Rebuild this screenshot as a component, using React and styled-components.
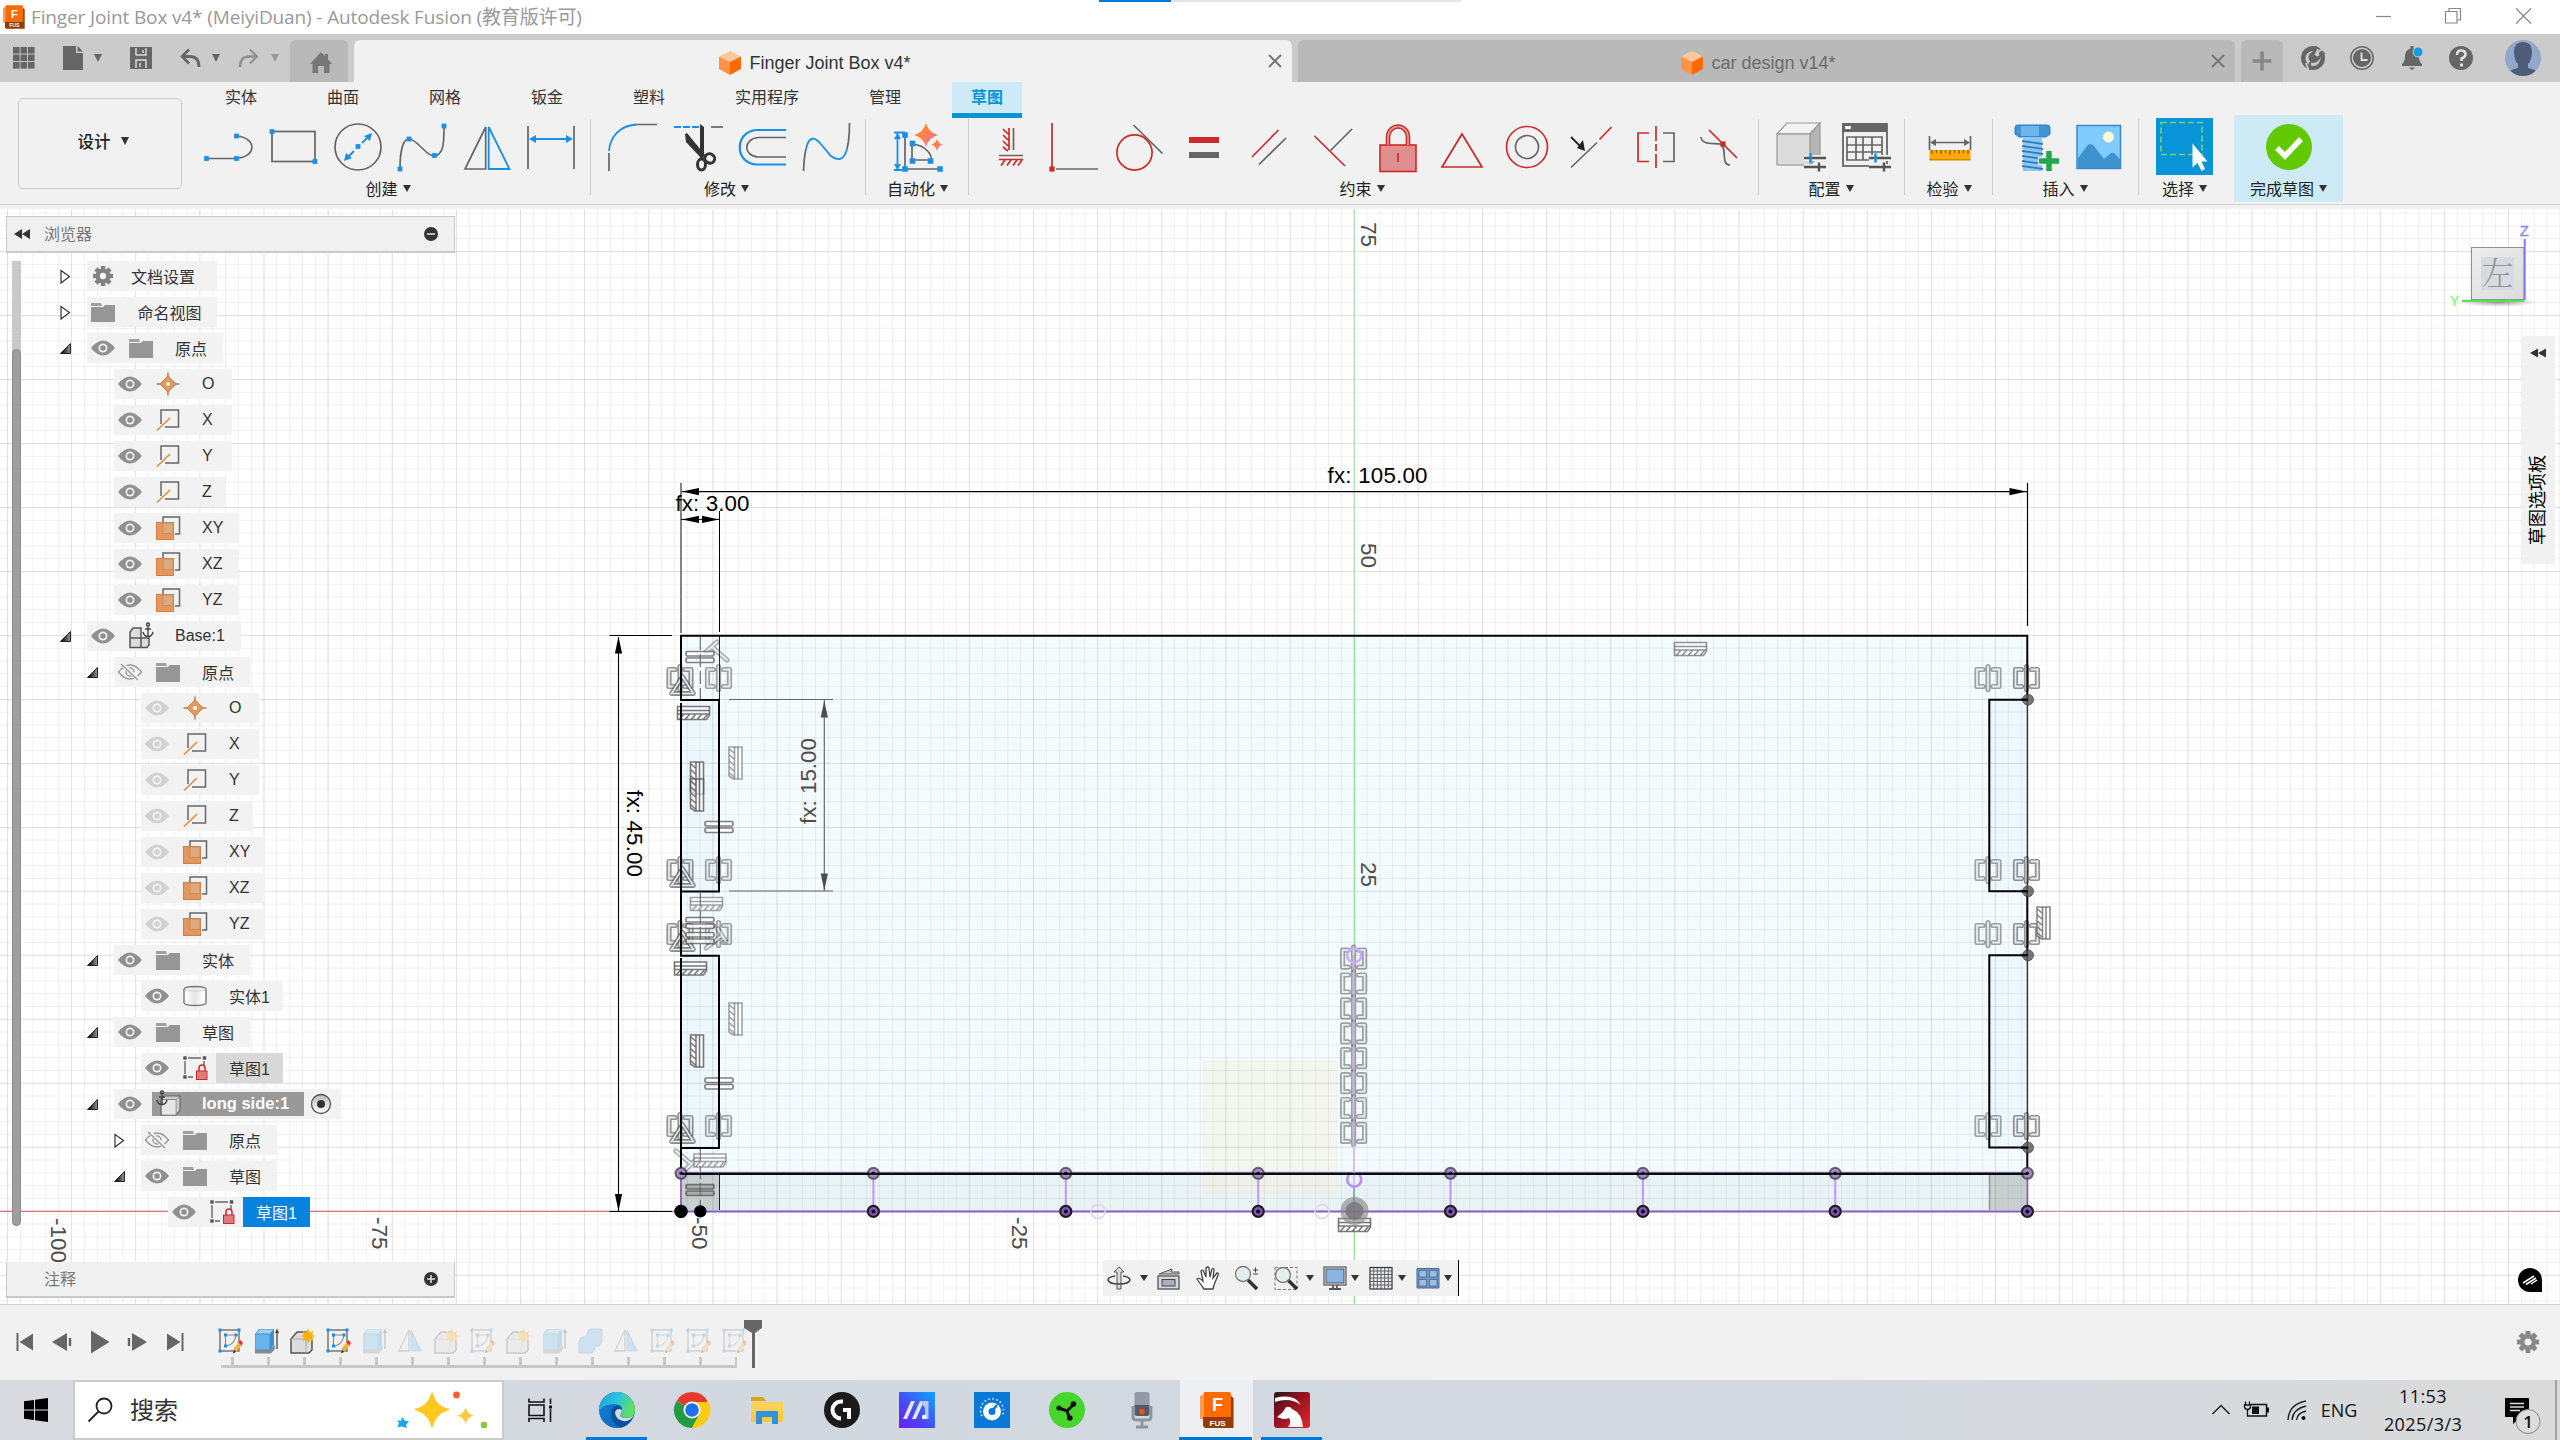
import React from 'react';
import styled, { createGlobalStyle } from 'styled-components';

const BLUE = '#1a8fe8';
const GREY = '#666';
const RED = '#cc2a2a';
const PURPLE = '#8a5cc0';

const Global = createGlobalStyle`
  * { box-sizing: border-box; }
  html, body { margin: 0; padding: 0; overflow: hidden; background: #fff; }
  body { font-family: "Liberation Sans", "Noto Sans CJK SC", sans-serif; font-size: 16px; color: #333; }
  svg { display: block; flex: none; overflow: visible; }
`;

const Screen = styled.div`
  width: 2560px;
  height: 1440px;
  display: grid;
  grid-template-rows: 34px 48px 127px 1096px 75px 60px;
  overflow: hidden;
`;

/* ---------- helpers ---------- */
const Ico = ({ s = 24, w, h, children, ...p }) => {
  const W = w || s;
  const H = h || s;
  return (
    <svg width={W} height={H} viewBox={`${-W / 2} ${-H / 2} ${W} ${H}`} fill="none" {...p}>
      {children}
    </svg>
  );
};
const Sq = ({ x, y, c = BLUE, r = 2.4 }) => <rect x={x - r} y={y - r} width={r * 2} height={r * 2} fill={c} />;

const Caret = styled.span`
  width: 0;
  height: 0;
  border-left: ${(p) => p.$w || 4.5}px solid transparent;
  border-right: ${(p) => p.$w || 4.5}px solid transparent;
  border-top: ${(p) => p.$h || 7}px solid ${(p) => p.$c || '#333'};
`;

/* ---------- title bar ---------- */
const TitleBar = styled.header`
  display: grid;
  grid-template-columns: 1099px 362px 1fr;
  background: #fff;
`;
const TitleLeft = styled.div`
  display: flex;
  align-items: center;
  gap: 6px;
  padding-left: 3px;
`;
const TitleText = styled.span`
  font: 19px/34px "Open Sans", "Noto Sans CJK SC", sans-serif;
  letter-spacing: -0.13px;
  color: #999;
  white-space: nowrap;
`;
const Progress = styled.div`
  height: 2px;
  background: linear-gradient(to right, #0078d7 72px, #e3e3e3 72px);
`;
const WinButtons = styled.div`
  display: flex;
  justify-content: flex-end;
  align-items: center;
  gap: 46px;
  padding-right: 25px;
  padding-bottom: 2px;
`;

const FusionLogo = ({ w = 22, h = 24 }) => (
  <svg width={w} height={h} viewBox="0 0 34 36">
    <path d="M0 4 L6 1 V27 H0z" fill="#ff9a55" />
    <path d="M4 0 H29 a2 2 0 0 1 2 2 V25 H4z" fill="#ff6b00" />
    <path d="M31 4 L33.5 6 V36 H31z" fill="#8f3d00" />
    <path d="M3 25 H31 V36 H5 L3 34z" fill="#933c00" />
    <text x="17.5" y="19" fontSize="18" fontWeight="700" fontFamily="Liberation Sans" fill="#fff" textAnchor="middle">F</text>
    <text x="17.5" y="33.5" fontSize="8" fontWeight="700" fontFamily="Liberation Sans" fill="#fff" textAnchor="middle">FUS</text>
  </svg>
);

/* ---------- document tab bar ---------- */
const TabBar = styled.div`
  display: flex;
  align-items: flex-end;
  background: #cbcbcb;
`;
const QuickAccess = styled.div`
  width: 290px;
  height: 48px;
  display: grid;
  grid-template-columns: 24px 49px 17px 51px 49px 18px 41px 18px;
  padding-left: 12px;
  align-items: center;
  justify-items: end;
`;
const HomeTab = styled.div`
  width: 58px;
  height: 42px;
  margin-right: 6px;
  border-radius: 6px 6px 0 0;
  background: #b9b9b9;
  display: flex;
  justify-content: center;
  align-items: center;
  padding: 4px 0 0 4px;
`;
const DocTab = styled.div`
  width: ${(p) => p.$w}px;
  height: 42px;
  margin-right: 6px;
  border-radius: 6px 6px 0 0;
  background: ${(p) => (p.$active ? '#f1f1f1' : '#b9b9b9')};
  color: ${(p) => (p.$active ? '#333' : '#6a6a6a')};
  display: grid;
  grid-template-columns: 1fr auto 1fr;
  align-items: center;
  font-size: 18px;
  padding-right: 10px;
`;
const DocName = styled.div`
  grid-column: 2;
  display: flex;
  align-items: center;
  gap: 8px;
  padding: 4px 6px 0 0;
`;
const DocClose = styled.div`
  justify-self: end;
`;
const AddTab = styled.div`
  width: 42px;
  height: 42px;
  border-radius: 6px 6px 0 0;
  background: #b9b9b9;
  display: flex;
  align-items: center;
  justify-content: center;
`;
const Account = styled.div`
  height: 48px;
  display: grid;
  grid-template-columns: repeat(4, 49.5px) 74px;
  padding-left: 5px;
  align-items: center;
  justify-items: center;
`;
const Cube = () => (
  <Ico w={22} h={24}>
    <path d="M0 -12 L11 -6.5 L0 -1 L-11 -6.5z" fill="#ffc79c" />
    <path d="M-11 -6.5 L0 -1 V12 L-11 6z" fill="#ff934a" />
    <path d="M11 -6.5 L0 -1 V12 L11 6z" fill="#ff6a00" />
  </Ico>
);
const Cross = () => (
  <Ico s={14}><path d="M-6 -6 L6 6 M6 -6 L-6 6" stroke="#777" strokeWidth="2" /></Ico>
);

/* ---------- ribbon ---------- */
const Ribbon = styled.section`
  background: #f1f1f1;
  display: grid;
  height: 127px;
  padding-bottom: 4px;
`;
const RibbonInner = styled.div`
  display: grid;
  grid-template-columns: 191px 1fr;
  border-bottom: 1px solid #d2d2d2;
`;
const Workspace = styled.button`
  width: 164px;
  height: 91px;
  margin: 16px 0 0 18px;
  border: 1.5px solid #c9c9c9;
  border-radius: 5px;
  background: #f1f1f1;
  display: flex;
  align-items: center;
  justify-content: center;
  gap: 10px;
  padding: 0 0 5px 6px;
  font: 500 16.5px "Noto Sans CJK SC", sans-serif;
  color: #222;
`;
const RibbonMain = styled.div`
  display: grid;
  grid-template-rows: 36px 1fr;
`;
const MenuTabs = styled.nav`
  display: flex;
  gap: 32px;
  padding-left: 15px;
`;
const MenuTab = styled.span`
  height: 36px;
  padding: 0 19px 0;
  display: flex;
  align-items: center;
  font-size: 16px;
  line-height: 30px;
  color: ${(p) => (p.$on ? '#0a94d8' : '#333')};
  font-weight: ${(p) => (p.$on ? 700 : 400)};
  background: ${(p) => (p.$on ? '#cdeaf6' : 'transparent')};
  border-bottom: ${(p) => (p.$on ? '5px solid #0a94d8' : '5px solid transparent')};
`;
const Groups = styled.div`
  display: flex;
`;
const Group = styled.div`
  width: ${(p) => p.$w}px;
  height: 87px;
  display: flex;
  flex-direction: column;
  align-items: center;
  background: ${(p) => (p.$hl ? '#cdebf6' : `linear-gradient(#cfcfcf, #cfcfcf) ${p.$last ? '-9px' : '100%'} 4px / 1.5px 76px no-repeat`)};
  margin: -3px 0 0 ${(p) => (p.$hl ? 4 : 0)}px;
  padding-top: 3px;
`;
const Tools = styled.div`
  display: flex;
  justify-content: center;
  height: 57px;
  align-items: center;
  padding-left: ${(p) => Math.max(0, p.$dx || 0)}px;
  padding-right: ${(p) => Math.max(0, -(p.$dx || 0))}px;
`;
const Tool = styled.div`
  width: ${(p) => p.$w || 64.5}px;
  display: flex;
  justify-content: center;
`;
const SelectTile = styled.div`
  width: 57px;
  height: 57px;
  background: #0a94d8;
  display: flex;
`;
const GroupLabel = styled.div`
  display: flex;
  align-items: center;
  gap: 5px;
  height: 26px;
  padding-right: ${(p) => p.$pull || 0}px;
  font-size: 16px;
  color: #222;
`;

const T = ({ children }) => <Ico s={56}>{children}</Ico>;
const g = { stroke: GREY, strokeWidth: 1.7 };
const b = { stroke: BLUE, strokeWidth: 1.8 };
const r = { stroke: RED, strokeWidth: 1.7 };

const Sliders = ({ x, y }) => (
  <g transform={`translate(${x} ${y})`}>
    <path d="M-11 -4 H11 M-11 5 H11" stroke="#f1f1f1" strokeWidth="6" />
    <path d="M-11 -4 H11 M-11 5 H11 M4 0.5 V9.5" stroke="#555" strokeWidth="2.4" />
    <path d="M-4.5 -8.5 V0.5" stroke={BLUE} strokeWidth="2.6" />
  </g>
);

const createTools = [
  <T><path d="M-22 11.5 H7 C28 10 28 -9 8 -11" {...g} /><Sq x={-22.5} y={11.5} /><Sq x={7.5} y={11.5} /><Sq x={7.5} y={-11} /></T>,
  <T><rect x="-21" y="-15.5" width="43" height="30" {...g} /><Sq x={-21} y={-15.5} /><Sq x={22} y={14.5} /></T>,
  <T><circle r="23" {...g} /><path d="M-10 10 L-4 4 M4 -4 L10 -10" {...b} /><path d="M14 -14 L12 -6 L6 -11z M-14 14 L-12 6 L-6 11z" fill={BLUE} /><Sq x={0} y={-0.5} /></T>,
  <T><path d="M-22 22 C-22 8 -20 -8 -13 -8 C-5 -8 4 9 12 9 C22 8 22 -5 22 -21" {...g} /><Sq x={-22} y={22} /><Sq x={-13} y={-8} /><Sq x={12.5} y={8.5} /><Sq x={22} y={-21} /></T>,
  <T><path d="M-1.3 -20 V22 H-22z" {...g} /><path d="M1.7 -20 V22 H22.5z" {...b} /></T>,
  <T><path d="M-23 -21 V22 M23 -21 V22" {...g} /><path d="M-18 -8 H18" {...b} /><path d="M-22 -8 L-15 -12 V-4z M22 -8 L15 -12 V-4z" fill={BLUE} /></T>,
];
const modifyTools = [
  <T><path d="M-24 6 V24 M4 -22.5 H24" {...g} /><path d="M-24 4 C-23 -10 -13 -22 4 -22.5" {...b} /></T>,
  <T>
    <path d="M-24 -20 H1" stroke={BLUE} strokeWidth="2" strokeDasharray="7 2" /><path d="M13 -20 H25" {...g} />
    <path d="M2 -23 L6 -20 V9 L2 12z M-13 -13 L-11 -14 L7 8 L4 12 L-12 -5z" fill="#333" />
    <ellipse cx="3.5" cy="17.5" rx="4" ry="5.6" stroke="#333" strokeWidth="3" />
    <ellipse cx="12" cy="11.5" rx="5" ry="4.6" transform="rotate(30 12 11)" stroke="#333" strokeWidth="3" />
  </T>,
  <T><path d="M24 -17 H-5 C-28 -16 -28 17 -5 17.5 H24" stroke={BLUE} strokeWidth="2.2" /><path d="M24 -9.5 H-4 C-19 -8 -19 9 -4 10 H24" {...g} /></T>,
  <T><path d="M-23.5 24 C-23 14 -22.5 8 -21 2 M22.5 -24 C22.5 -12 22 -6 20 2" {...g} /><path d="M-21 2 C-18 -12 -12 -9 -8 -5 L4 9 C10 14 17 14 20 2" {...b} /></T>,
];
const autoTools = [
  <T>
    <path d="M-13 -11 V20 M-11 22 H20" {...g} /><path d="M-6 -3 C8 -2 14 8 13 13 H-6z" {...g} />
    <path d="M-20.5 -14 V22 M-24 -14.5 H-13 M-24 23 H-16" {...b} /><path d="M-20.5 -14 L-24 -8 H-17z M-20.5 23 L-24 17 H-17z" fill={BLUE} />
    <Sq x={-13} y={-12} r={2.8} /><Sq x={-5.5} y={-3.5} r={2.8} /><Sq x={-5.5} y={14} r={2.8} /><Sq x={12.5} y={14} r={2.8} /><Sq x={-13} y={22} r={2.8} /><Sq x={22} y={22} r={2.8} />
    <defs><linearGradient id="spk" x1="0" y1="0" x2="1" y2="1"><stop offset="0.2" stopColor="#ff8a1e" /><stop offset="0.6" stopColor="#ff7a66" /><stop offset="1" stopColor="#e85de0" /></linearGradient></defs>
    <path d="M8 -24 Q10.5 -14.5 20 -12 Q10.5 -9.5 8 0 Q5.5 -9.5 -4 -12 Q5.5 -14.5 8 -24z" fill="url(#spk)" />
    <path d="M19 -8 Q20.2 -3.5 25 -2.5 Q20.2 -1.5 19 4 Q17.8 -1.5 13 -2.5 Q17.8 -3.5 19 -8z" fill="url(#spk)" />
  </T>,
];
const constraintTools = [
  <T>
    <path d="M-2 -19 V3 M-8 -18 L-3 -13 M-8 -12 L-3 -7 M-8 -6 L-3 -1 M-8 0 L-3 4 M-12 12.5 H12 M-10 18.5 L-6 13 M-4 18.5 L0 13 M2 18.5 L6 13 M7 18.5 L11 13" {...r} />
    <path d="M2.5 -19 V3 M-12 8.5 H12" {...g} />
  </T>,
  <T><path d="M-23 -24 V20" {...r} /><Sq x={-23} y={22} c={RED} r={2.6} /><path d="M-19 22 H23" {...g} /></T>,
  <T><circle cx="-5.5" cy="5.5" r="17.6" {...r} /><path d="M-6.5 -22 L22.5 6.5" {...g} /></T>,
  <T><rect x="-15" y="-10" width="30" height="6" fill={RED} /><rect x="-15" y="5" width="30" height="6" fill={GREY} /></T>,
  <T><path d="M-17 10 L9.5 -17" {...r} /><path d="M-10 17.5 L17 -9" {...g} /></T>,
  <T><path d="M-18.5 -11 L12 19" {...r} /><path d="M-2.5 3.5 L19 -18" {...g} /></T>,
  <T><rect x="-18" y="-2" width="36" height="26.5" fill="#df8f8f" stroke={RED} strokeWidth="1.6" /><path d="M-10 -2 V-10 A10 10.5 0 0 1 10 -10 V-2" stroke={RED} strokeWidth="4.6" /><path d="M-10 -2 V-10 A10 10.5 0 0 1 10 -10 V-2" stroke="#e79b9b" strokeWidth="1.6" /><path d="M0 6 V15" {...r} /></T>,
  <T><path d="M0 -13 L20 20 H-20z" {...r} /></T>,
  <T><circle r="20.5" {...r} /><circle r="11.5" {...g} /></T>,
  <T><path d="M-20 20.5 L6 -4.5" {...g} /><path d="M8.5 -7.5 L20.5 -20" {...r} /><path d="M-20 -10 L-10 0" stroke="#222" strokeWidth="1.8" /><path d="M-6 4 L-14 1 L-8 -7z" fill="#222" /></T>,
  <T><path d="M-7 -14 H-18 V14.5 H-7 M0 -21 V-6 M0 -3 V4 M0 7 V21" {...r} /><path d="M7 -14 H18 V14.5 H7" {...g} /></T>,
  <T><path d="M-19 -10 C-18 -2 -8 -4 0 -3 C8 0 0 18 10 18" {...g} /><path d="M-11 -17 L17 11" {...r} /><Sq x={3} y={-3} c={RED} r={2.6} /></T>,
];
const configTools = [
  <T>
    <path d="M-24 -13 L-14 -24 H19 L9 -13z" fill="#f2f2f2" stroke="#999" strokeWidth="1.2" />
    <path d="M9 -13 L19 -24 V8 L9 18z" fill="#b5b5b5" stroke="#999" strokeWidth="1.2" />
    <rect x="-24" y="-13" width="33" height="31" fill="#dcdcdc" stroke="#999" strokeWidth="1.2" />
    <Sliders x={14} y={15} />
  </T>,
  <T>
    <rect x="-23" y="-23" width="44" height="42" stroke={GREY} strokeWidth="1.8" /><rect x="-24" y="-24" width="45" height="9" fill={GREY} /><rect x="-21" y="-21" width="6" height="3" fill="#fff" />
    <path d="M-19 -10 H16 V13 H-19z M-19 -2 H16 M-19 5 H16 M-10 -10 V13 M-3 -10 V13 M6 -10 V13" {...g} />
    <Sliders x={14} y={15} />
  </T>,
];
const measureTools = [
  <T><path d="M-20.5 -11 V3 M20.5 -11 V3 M-16 -4.5 H16" {...g} /><path d="M-20 -4.5 L-14 -8 V-1z M20 -4.5 L14 -8 V-1z" fill={GREY} /><rect x="-20.5" y="3" width="41" height="10" fill="#ffaa00" /><rect x="-20.5" y="12" width="41" height="1.5" fill="#d98500" />
    <path d="M-18 3 V7 M-13.5 3 V6 M-9 3 V7 M-4.5 3 V6 M0 3 V8 M4.5 3 V6 M9 3 V7 M13.5 3 V6 M18 3 V7" stroke="#7a5500" strokeWidth="1.2" /></T>,
];
const insertTools = [
  <T>
    <path d="M-22 -19 Q-22 -22 -19 -22 H10 Q13 -22 13 -19 V-13 L9 -10 H-18 L-22 -13z" fill="#3f94d8" stroke="#2f7dbd" /><rect x="-16" y="-21" width="18" height="10" fill="#6db6ec" />
    <path d="M-14 -10 H5 V24 H-14z" fill="#8cc6f2" /><path d="M-15 -6 L6 -3 M-15 -1 L6 2 M-15 4 L6 7 M-15 9 L6 12 M-15 14 L6 17 M-15 19 L6 22" stroke="#2f7dbd" strokeWidth="1.8" />
    <path d="M12 3 V25 M1 14 H23" stroke="#f1f1f1" strokeWidth="8" /><path d="M12 4 V24 M2 14 H22" stroke="#22a84a" strokeWidth="5.5" />
  </T>,
  <T><rect x="-22" y="-21.5" width="43.5" height="43" fill="#80ccff" stroke="#3a87c4" strokeWidth="1.5" /><path d="M-21 11 L-12 -1 Q-9 -5 -5 -1 L5 12 L11 7 Q14 4 17 8 L21 12 V21 H-21z" fill="#3e93cf" /><circle cx="9.5" cy="-10" r="5" fill="#fffbd0" stroke="#fff" /></T>,
];

const ToolGroup = ({ w, label, tools, tw, dx, pull }) => (
  <Group $w={w}>
    <Tools $dx={dx}>{tools.map((t, i) => <Tool key={i} $w={tw}>{t}</Tool>)}</Tools>
    <GroupLabel $pull={pull}>{label}<Caret /></GroupLabel>
  </Group>
);

/* ---------- viewport ---------- */
const Viewport = styled.main`
  display: grid;
  height: 1096px;
  overflow: hidden;
  border-bottom: 1px solid #cfcfcf;
  > * { grid-area: 1 / 1; }
`;
const Overlay = styled.div`
  display: grid;
  grid-template-columns: 455px 1fr 100px;
  height: 1095px;
  z-index: 1;
`;
const BrowserPanel = styled.aside`
  display: flex;
  flex-direction: column;
  padding: 7px 0 0 6px;
`;
const PanelHeader = styled.div`
  flex: none;
  height: ${(p) => p.$h}px;
  border: solid #c9c9c9;
  border-width: ${(p) => (p.$open ? '0 1px 2px 1px' : '1px 1px 2px')};
  background: #f0f0f0;
  color: #777;
  display: grid;
  grid-template-columns: 37px 1fr 44px;
  align-items: center;
  padding-bottom: 2px;
`;
const HeaderButton = styled.div`
  padding: 2px 0 0 14px;
`;
const TreeArea = styled.div`
  flex: none;
  display: flex;
  align-items: flex-start;
  height: 1001px;
  margin-top: 8px;
`;
const ScrollTrack = styled.div`
  width: 9px;
  height: 965px;
  margin-left: 6px;
  border-radius: 0 0 5px 5px;
  background: #c8c9cb;
  padding-top: 88px;
`;
const ScrollThumb = styled.div`
  height: 877px;
  border-radius: 5px;
  border: 1px solid #8c8c8e;
  background: #9e9ea0;
`;
const Tree = styled.div`
  display: flex;
  flex-direction: column;
  padding-left: 36px;
`;
const TreeRow = styled.div`
  flex: none;
  height: 36px;
  display: flex;
  align-items: flex-start;
  padding-left: ${(p) => p.$level * 27}px;
`;
const Expander = styled.div`
  width: 30px;
  height: 30px;
  display: flex;
  align-items: center;
  padding-left: 3px;
`;
const Strip = styled.div`
  height: 30px;
  display: flex;
  align-items: center;
  background: #f2f2f2;
`;
const IconCell = styled.div`
  width: ${(p) => p.$w || 37.5}px;
  height: ${(p) => (p.$active ? 24 : 30)}px;
  display: flex;
  align-items: center;
  justify-content: center;
  padding-right: ${(p) => (p.$pad === undefined ? 5 : p.$pad)}px;
  background: ${(p) => (p.$active ? '#999' : 'transparent')};
`;
const tones = {
  plain: 'background: transparent; color: #333;',
  grey: 'background: #d9d9d9; color: #333;',
  blue: 'background: #0583dd; color: #fff;',
  active: 'background: #999; color: #fff; font-weight: 700; height: 24px;',
};
const Label = styled.div`
  width: ${(p) => p.$w}px;
  height: 30px;
  padding: 0 0 1px 13px;
  display: flex;
  align-items: center;
  white-space: nowrap;
  font-size: ${(p) => (p.$tone === 'active' ? 16.5 : 16)}px;
  ${(p) => tones[p.$tone || 'plain']}
`;

const Eye = ({ c = '#909090' }) => (
  <Ico w={24} h={16}><path d="M-12 0 Q-6 -7.5 0 -7.5 Q6 -7.5 12 0 Q6 7.5 0 7.5 Q-6 7.5 -12 0z" fill={c} /><circle r="4.5" fill="#f2f2f2" /><circle r="2.8" fill={c} /></Ico>
);
const EyeOff = () => (
  <Ico w={24} h={16}><path d="M-11.5 0 Q-6 -7 0 -7 Q6 -7 11.5 0 Q6 7 0 7 Q-6 7 -11.5 0z" stroke="#999" strokeWidth="1.4" /><circle r="4" stroke="#999" strokeWidth="1.4" /><circle r="1.6" fill="#999" /><path d="M-8 -8 L9 8" stroke="#f2f2f2" strokeWidth="4" /><path d="M-9 -8 L8 8" stroke="#999" strokeWidth="1.4" /></Ico>
);
const Folder = () => (
  <Ico w={24} h={19}><path d="M-12 -9.5 H-2 L-1 -6.5 H-12z" fill="#a0a0a0" /><path d="M-12 -5.5 H0 L2 -7.5 H12 V9.5 H-12z" fill="#969696" /></Ico>
);
const Point = () => (
  <Ico s={24}><path d="M0 -11.5 V11.5 M-11.5 0 H11.5" stroke="#c8763a" strokeWidth="1.5" /><path d="M0 -8 L8 0 L0 8 L-8 0z" fill="#e59a62" stroke="#c8763a" /><rect x="-2.2" y="-2.2" width="4.4" height="4.4" fill="#fff" stroke="#c8763a" strokeWidth="0.6" /></Ico>
);
const AxisI = () => (
  <Ico s={24}><path d="M-7 4 V-10 H10.5 V7 H-3" stroke="#666" strokeWidth="1.5" /><path d="M-11 10.5 L2 -2" stroke="#e8893c" strokeWidth="1.6" /></Ico>
);
const PlaneI = () => (
  <Ico s={24}><path d="M-5 -6 V-11 H11.5 V6 H7" stroke="#666" strokeWidth="1.5" /><rect x="-11.5" y="-5.5" width="17" height="17" fill="#e5965c" stroke="#cf7f45" /><rect x="-5" y="-5" width="10" height="10.5" fill="#dfa97e" stroke="#c58a60" strokeWidth="0.8" /></Ico>
);
const SketchLock = () => (
  <Ico s={24}><path d="M-7 -10 H6 M-10 -7 V6 M-7 9 H-2 M9 -7 V-2" stroke="#666" strokeWidth="1.4" /><Sq x={-10} y={-10} c="#555" r={1.7} /><Sq x={9.5} y={-10} c="#555" r={1.7} /><Sq x={-10} y={9} c="#555" r={1.7} />
    <path d="M4 3 V0 A3 3 0 0 1 10 0 V3" stroke={RED} strokeWidth="1.5" /><rect x="1.5" y="3" width="10.5" height="8.5" fill="#e07a7a" stroke={RED} /></Ico>
);
const BodyI = () => (
  <Ico s={24}><defs><linearGradient id="cyl"><stop offset="0" stopColor="#fff" /><stop offset="0.5" stopColor="#e4e4e6" /><stop offset="0.9" stopColor="#fff" /></linearGradient></defs><path d="M-11 -7 Q-10 -9.5 0 -9.5 Q10 -9.5 11 -7 V7 Q10 9.5 0 9.5 Q-10 9.5 -11 7z" fill="url(#cyl)" stroke="#777" strokeWidth="1.4" /><path d="M-10 -6 Q0 -3.5 10 -6" stroke="#ccc" /></Ico>
);
const anchor = <path d="M0 -5 V5 M-3 -2 H3 M-5 1 Q-4 5.5 0 5.5 Q4 5.5 5 1 M-1.5 -6.5 a1.5 1.5 0 1 1 3 0 a1.5 1.5 0 1 1 -3 0" stroke="#444" strokeWidth="1.4" fill="none" />;
const CompI = () => (
  <Ico s={24}><path d="M-11 2 H0 V11.5 H-11z M-11 2 V-4 L-8 -8 H0 V2 M0 2 H8 V9 L6 11.5 H0" fill="#dcdcdc" stroke="#555" strokeWidth="1.5" /><g transform="translate(7 -5)">{anchor}</g></Ico>
);
const PartI = () => (
  <Ico s={24}><path d="M-7 -5 L-3 -8 H12 V6 L8 11 H-7z" fill="#cfcfcf" stroke="#666" strokeWidth="1.2" /><path d="M-7 -4.5 H8 V11 M8 -4.5 L12 -8" stroke="#888" /><rect x="-6" y="-4" width="13.5" height="14.5" fill="#e6e6e6" /><g transform="translate(-6 -5)">{anchor}</g></Ico>
);
const Gear = ({ s = 20, c = '#808080' }) => (
  <svg width={s} height={s} viewBox="-10 -10 20 20" fill="none">
    {[0, 45, 90, 135].map((a) => <rect key={a} x="-2.2" y="-10" width="4.4" height="20" fill={c} transform={`rotate(${a})`} />)}
    <circle r="5.3" stroke={c} strokeWidth="4.2" /><circle r="3.2" fill="#f2f2f2" />
  </svg>
);
const TriOpen = () => (
  <Ico w={10} h={13}><path d="M-4 -6 L4.5 0 L-4 6.5z" fill="#fff" stroke="#333" strokeWidth="1.2" /></Ico>
);
const TriDown = () => (
  <Ico w={11} h={11}><defs><linearGradient id="td" x1="0" x2="1"><stop offset="0.3" stopColor="#222" /><stop offset="1" stopColor="#999" /></linearGradient></defs><path d="M-5 5 L5 -5 V5z" fill="url(#td)" stroke="#222" /></Ico>
);
const icons = { folder: <Folder />, point: <Point />, axis: <AxisI />, plane: <PlaneI />, sketch: <SketchLock />, body: <BodyI />, comp: <CompI />, part: <PartI /> };

// level, expander, eye, icon, label, label width, tone
const rows = [
  [0, 'open', null, 'gear', '文档设置', 99],
  [0, 'open', null, 'folder', '命名视图', 92],
  [0, 'down', 'on', 'folder', '原点', 61],
  ...['O', 'X', 'Y', 'Z'].map((t, i) => [1, null, 'on', i ? 'axis' : 'point', t, t === 'Z' ? 37 : 43]),
  ...['XY', 'XZ', 'YZ'].map((t) => [1, null, 'on', 'plane', t, 49]),
  [0, 'down', 'on', 'comp', 'Base:1', 79],
  [1, 'down', 'off', 'folder', '原点', 61],
  ...['O', 'X', 'Y', 'Z'].map((t, i) => [2, null, 'dim', i ? 'axis' : 'point', t, t === 'Z' ? 37 : 43]),
  ...['XY', 'XZ', 'YZ'].map((t) => [2, null, 'dim', 'plane', t, 49]),
  [1, 'down', 'on', 'folder', '实体', 61],
  [2, null, 'on', 'body', '实体1', 67],
  [1, 'down', 'on', 'folder', '草图', 61],
  [2, null, 'on', 'sketch', '草图1', 67, 'grey'],
  [1, 'down', 'on', 'part', 'long side:1', 115, 'active'],
  [2, 'open', 'off', 'folder', '原点', 61],
  [2, 'down', 'on', 'folder', '草图', 61],
  [3, null, 'on', 'sketch', '草图1', 67, 'blue'],
];

const TreeItem = ({ row }) => {
  const [level, exp, eye, icon, label, w, tone] = row;
  return (
    <TreeRow $level={level}>
      <Expander>{exp === 'open' ? <TriOpen /> : exp === 'down' ? <TriDown /> : null}</Expander>
      <Strip>
        {eye && <IconCell>{eye === 'off' ? <EyeOff /> : <Eye c={eye === 'dim' ? '#d2d2d2' : undefined} />}</IconCell>}
        {icon === 'gear' ? <IconCell $w={31} $pad={0}><Gear /></IconCell> : <IconCell $active={tone === 'active'}>{icons[icon]}</IconCell>}
        <Label $w={w} $tone={tone}>{label}</Label>
        {tone === 'active' && (
          <IconCell $w={37} $pad={3}>
            <Ico s={22}><defs><linearGradient id="rad" x1="0" y1="0" x2="0" y2="1"><stop offset="0" stopColor="#b8bcc4" /><stop offset="1" stopColor="#fff" /></linearGradient></defs><circle r="9.5" fill="url(#rad)" stroke="#555" strokeWidth="1.3" /><circle r="4" fill="#333" /></Ico>
          </IconCell>
        )}
      </Strip>
    </TreeRow>
  );
};

const Center = styled.div`
  display: flex;
  align-items: flex-end;
  padding: 0 0 8px 648px;
`;
const NavBar = styled.div`
  width: 356px;
  height: 36px;
  background: #f1f1f1;
  border-right: 1.5px solid #000;
  display: grid;
  grid-template-columns: 28px 16.5px 32.5px 39.5px 38.5px 40px 16px 33px 11.5px 34.5px 12.5px 34.5px 12px;
  align-items: center;
  justify-items: end;
`;
const RightRail = styled.div`
  display: flex;
  flex-direction: column;
  align-items: flex-end;
  padding: 127px 5px 12px 0;
  justify-content: space-between;
`;
const PaletteTab = styled.div`
  width: 33px;
  height: 228px;
  background: #f1f1f1;
  display: flex;
  flex-direction: column;
  align-items: center;
  justify-content: space-between;
  padding: 12px 2px 19px 0;
`;
const VerticalText = styled.span`
  writing-mode: vertical-rl;
  text-orientation: sideways;
  transform: rotate(180deg);
  font-size: 18px;
  line-height: 22px;
  color: #000;
`;
const PinButton = styled.div`
  padding-right: 13px;
`;
const Rewind = ({ c = '#333' }) => (
  <Ico w={16} h={10}><path d="M-8 0 L0 -4.5 V4.5z M0 0 L8 -4.5 V4.5z" fill={c} /></Ico>
);

/* ---------- sketch drawing ---------- */
const UX = 12.826;
const UY = 12.795;
const OX = 1354.2;
const OY = 1211.2;

const buildGrid = () => {
  let minor = '';
  let major = '';
  for (let i = -106; i <= 95; i++) {
    const x = (OX + i * UX).toFixed(1);
    const seg = `M${x} 209V1305`;
    if (i % 5 === 0) major += seg; else minor += seg;
  }
  for (let j = -8; j <= 79; j++) {
    const y = (OY - j * UY).toFixed(1);
    const seg = `M0 ${y}H2560`;
    if (j % 5 === 0) major += seg; else minor += seg;
  }
  return { minor, major };
};
const grid = buildGrid();

const glyph = (d) => (
  <>
    <path d={d} stroke="#4c4c4c" strokeOpacity="0.6" strokeWidth="5.2" strokeLinejoin="round" strokeLinecap="round" />
    <path d={d} stroke="#e6ebee" strokeWidth="1.8" strokeLinecap="round" />
  </>
);
const Sym = ({ x, y, o = 1 }) => (
  <g transform={`translate(${x} ${y})`} opacity={o}>{glyph('M-5 -8.5 H-11 V8.5 H-5 M5 -8.5 H11 V8.5 H5 M0 -11.5 V11.5')}</g>
);
const Tri = ({ x, y }) => (
  <g transform={`translate(${x} ${y})`}><path d="M0 -8 L11 9 H-11z" stroke="#4c4c4c" strokeOpacity="0.65" strokeWidth="4.8" strokeLinejoin="round" /><path d="M0 -8 L11 9 H-11z" stroke="#e4e9ec" strokeWidth="1.6" /></g>
);
const Eq = ({ x, y, dark }) => (
  <g transform={`translate(${x} ${y})`} fill={dark ? '#888' : '#fff'} fillOpacity={dark ? 0.5 : 0.7} stroke="#4c4c4c" strokeOpacity="0.7" strokeWidth="1.7"><rect x="-14" y="-5.5" width="28" height="4.5" rx="1.5" /><rect x="-14" y="1" width="28" height="4.5" rx="1.5" /></g>
);
const Hatch = ({ x, y, v, o = 0.75 }) => (
  <g transform={`translate(${x} ${y})${v ? ' rotate(90)' : ''}`} stroke="#4c4c4c" strokeOpacity={o} strokeWidth="1.6">
    <path d="M-16 -6.5 H16 V2 L13 6.5 H-16z" fill="#fff" fillOpacity="0.6" /><path d="M-16 -2.5 H16 M-16 1 H16" />
    <path d="M-14 6 L-10 1.5 M-8 6 L-4 1.5 M-2 6 L2 1.5 M4 6 L8 1.5 M10 6 L14 1.5" />
  </g>
);
const Perp = ({ x, y, a = 0 }) => (
  <g transform={`translate(${x} ${y}) rotate(${a})`} opacity="0.7">{glyph('M-10 2 L1 -8 M-4 -3 L11 10')}</g>
);
const Arrow = ({ x, y, a, c = '#000' }) => <path d="M0 0 L17 -3.6 V3.6z" fill={c} transform={`translate(${x} ${y}) rotate(${a})`} />;

const Outline = `M681 1173.7 V1148 H719 V955.7 H681 V891.5 H719 V700 H681 V635.7 H2027.3 V699.7 H1989.3 V891.3 H2027.3 V955.3 H1989.3 V1147.6 H2027.3 V1173.7z`;
const xs = [681, 873.4, 1065.8, 1258.2, 1450.5, 1642.9, 1835.2, 2027.4];

const Drawing = () => (
  <svg width="2560" height="1095" viewBox="0 209 2560 1095" fill="none" fontFamily="Liberation Sans" style={{ overflow: 'hidden' }}>
    <rect y="209" width="2560" height="1096" fill="#fff" />
    <rect x="681" y="636" width="1346.5" height="538" fill="#f3fbff" />
    <path d="M681 700 H719 V891 H681z M681 956 H719 V1148 H681z M1989 700 H2027 V891 H1989z M1989 956 H2027 V1148 H1989z" fill="#edf7fe" />
    <rect x="681" y="1174" width="1346.5" height="37" fill="#e9f2f5" />
    <path d="M681 1175 H719 V1210 H681z M1989.3 1175 H2027 V1210 H1989.3z" fill="#c7d0cf" />
    <rect x="1204" y="1061.5" width="132.5" height="132" fill="#f8eed5" fillOpacity="0.36" stroke="#f3ead0" strokeOpacity="0.5" />
    <path d={grid.minor} stroke="#000" strokeOpacity="0.06" />
    <path d={grid.major} stroke="#000" strokeOpacity="0.12" />
    <path d="M0 1211.3 H681" stroke="#e0707a" strokeWidth="1.2" />
    <path d="M2027 1211.3 H2560" stroke="#c49aa2" strokeWidth="1.2" />
    <path d="M1354.3 636 V1305" stroke="#8ee08e" strokeWidth="1.1" />
    <path d="M1354.3 209 V636" stroke="#a9dba9" strokeWidth="1.1" />

    <g fontSize="22.5" fill="#4d4d4d">
      <text transform="translate(1361 222) rotate(90)">75</text>
      <text transform="translate(1361 543) rotate(90)">50</text>
      <text transform="translate(1361 862) rotate(90)">25</text>
      <text transform="translate(51 1218) rotate(90)">-100</text>
      <text transform="translate(372 1217) rotate(90)">-75</text>
      <text transform="translate(692 1217) rotate(90)">-50</text>
      <text transform="translate(1012 1217) rotate(90)">-25</text>
    </g>

    {/* constraint markers */}
    {[678, 870, 934, 1126].map((y) => (
      <g key={y}>
        <Sym x={680} y={y} /><Tri x={682.5} y={y + 6.5} /><Sym x={718.5} y={y} o={0.85} />
        <Sym x={1988} y={y} o={0.85} /><Sym x={2026.5} y={y} />
      </g>
    ))}
    {[...Array(8)].map((_, i) => <Sym key={i} x={1353.6} y={958.6 + i * 24.9} o={0.85} />)}
    <Perp x={716} y={650} /><Perp x={718} y={939} a={100} /><Perp x={687} y={1161} a={180} />
    <Eq x={700} y={657} /><Eq x={719} y={827} /><Eq x={719} y={1083.5} /><Eq x={700} y={923} /><Eq x={700} y={938} />
    <Hatch x={693.5} y={713} /><Hatch x={706.5} y={904} o={0.5} /><Hatch x={690.5} y={968.5} /><Hatch x={710} y={1160.5} o={0.5} /><Hatch x={1690.5} y={649} o={0.6} />
    <Hatch x={735.5} y={763} v o={0.5} /><Hatch x={697} y={778} v /><Hatch x={697} y={795} v /><Hatch x={697} y={1051} v /><Hatch x={735.5} y={1019} v o={0.5} /><Hatch x={2043.5} y={923} v o={0.65} />

    {/* profile */}
    <path d="M700.3 637 V699 M700.3 893 V955 M700.3 1149 V1205" stroke="#666" strokeWidth="1.1" strokeDasharray="13 4" />
    <path d="M719.5 636 V700 M719.5 1175 V1210" stroke="#222" />
    <path d="M1989.5 1175 V1210" stroke="#8d9595" strokeWidth="1.5" />
    <path d="M681 1174 V1211 M2027.4 1174 V1211" stroke={PURPLE} strokeWidth="1.8" />
    {xs.slice(1, 7).map((x) => <path key={x} d={`M${x} 1176 V1208`} stroke="#bd98fb" strokeWidth="2" />)}
    <path d="M681 1211.5 H2027" stroke={PURPLE} strokeWidth="2" />
    <path d="M681 1172.3 H2027" stroke="#c9b4f4" strokeWidth="1.5" />
    <path d={Outline} stroke="#000" strokeWidth="2" />
    <path d="M681 703 V891 M681 958 V1148" stroke="#000" strokeWidth="2" />
    <path d="M2027.4 700 V891 M2027.4 956 V1148" stroke="#333" strokeWidth="1.5" />

    <path d="M1354 955 V1146" stroke="#bfa6e6" strokeWidth="2" strokeOpacity="0.8" />
    <path d="M1354 1146 V1186" stroke="#d3c2f8" strokeWidth="2" />
    <path d="M1354 1188 V1205" stroke="#5fa6b0" strokeWidth="1.5" />
    <circle cx="1354.2" cy="955.5" r="7" stroke="#cdaaf8" strokeWidth="2.6" />
    <path d="M1349 1175 A7 7 0 1 0 1359.5 1175" stroke="#b98bf5" strokeWidth="2.6" />
    <circle cx="1098" cy="1211.5" r="7" stroke="#ddd0f8" strokeWidth="1.5" /><circle cx="1322" cy="1211.5" r="7" stroke="#ddd0f8" strokeWidth="1.5" />
    <Hatch x={1354.5} y={1225} />
    <circle cx="1354.5" cy="1211" r="14" fill="#888" fillOpacity="0.65" /><circle cx="1354.5" cy="1211" r="9" fill="#77707f" fillOpacity="0.8" />

    {xs.map((x) => (
      <g key={x}>
        <circle cx={x} cy="1173.3" r="5.5" fill="#a98bd0" stroke="#333" strokeOpacity="0.7" strokeWidth="2" /><circle cx={x} cy="1173.3" r="1.8" fill="#222" />
        <circle cx={x} cy="1211.4" r="5.5" fill="#8257b8" stroke="#1c1c22" strokeWidth="2.2" /><circle cx={x} cy="1211.4" r="2" fill="#000" />
      </g>
    ))}
    <path d="M681 1173.7 H2027.4" stroke="#000" strokeWidth="2" />
    {[699.7, 891.3, 955.3, 1147.6].map((y) => <g key={y}><circle cx="2028" cy={y} r="5.5" fill="#555" fillOpacity="0.8" stroke="#333" strokeOpacity="0.6" /><path d={`M2021 ${y} H2028`} stroke="#000" strokeWidth="2" /></g>)}
    <circle cx="681" cy="1211.4" r="6.6" fill="#000" /><circle cx="700.3" cy="1211.4" r="6.2" fill="#000" />
    <Eq x={700} y={1190} dark />

    {/* dimensions */}
    <path d="M681 491.6 H2027" stroke="#000" strokeWidth="1.2" />
    <path d="M681 483 V633" stroke="#777" strokeWidth="1.8" />
    <path d="M2027.5 483 V626" stroke="#000" strokeWidth="1.2" />
    <path d="M719.5 511 V632 M681 519.4 H719.5" stroke="#000" />
    <path d="M618.5 637 V1211 M609.5 635.5 H672 M609.5 1211.5 H672" stroke="#000" strokeWidth="1.1" />
    <path d="M824.3 700 V891 M729 699.5 H833 M729 891 H833" stroke="#666" strokeWidth="1.2" />
    <Arrow x={682} y={491.6} a={0} /><Arrow x={2026.5} y={491.6} a={180} />
    <Arrow x={682} y={519.4} a={0} /><Arrow x={719} y={519.4} a={180} />
    <Arrow x={618.5} y={636.5} a={90} /><Arrow x={618.5} y={1211} a={-90} />
    <Arrow x={824.3} y={700.5} a={90} c="#4d4d4d" /><Arrow x={824.3} y={890.5} a={-90} c="#4d4d4d" />
    <g fontSize="22.3" fill="#000">
      <text x="1327.5" y="483" textLength="100">fx: 105.00</text>
      <text x="675.5" y="510.5" textLength="74">fx: 3.00</text>
      <text transform="translate(627 790) rotate(90)" textLength="87">fx: 45.00</text>
      <text transform="translate(815.5 824) rotate(-90)" textLength="86" fill="#4d4d4d">fx: 15.00</text>
    </g>

    {/* view cube */}
    <defs>
      <linearGradient id="vc" x1="0" y1="0" x2="1" y2="1"><stop offset="0" stopColor="#ededed" /><stop offset="1" stopColor="#dcdcdc" /></linearGradient>
      <radialGradient id="vs"><stop offset="0" stopColor="#777" stopOpacity="0.8" /><stop offset="1" stopColor="#999" stopOpacity="0" /></radialGradient>
    </defs>
    <ellipse cx="2498" cy="302" rx="40" ry="5" fill="url(#vs)" />
    <rect x="2471.5" y="247.5" width="52.5" height="52" fill="url(#vc)" stroke="#8f8f8f" />
    <rect x="2481" y="257" width="33" height="33" fill="#d7dade" />
    <text x="2497.5" y="285" fontSize="32" fontFamily="Noto Serif CJK SC, Noto Sans CJK SC" fontWeight="300" fill="#92979d" textAnchor="middle">左</text>
    <path d="M2524.7 239 V300" stroke="#7d7df5" strokeWidth="2" />
    <path d="M2462 300.8 H2524" stroke="#55e055" strokeWidth="2.2" />
    <text x="2524.3" y="236" fontSize="15" fill="#8a8aff" stroke="#8a8aff" strokeWidth="0.4" textAnchor="middle">Z</text>
    <text x="2454.5" y="305.5" fontSize="14" fill="#7dff7d" stroke="#7dff7d" strokeWidth="0.4" textAnchor="middle">Y</text>
  </svg>
);

/* ---------- timeline ---------- */
const Timeline = styled.section`
  background: #f1f1f1;
  display: flex;
  align-items: flex-start;
`;
const Playback = styled.div`
  display: grid;
  grid-template-columns: repeat(5, 37.5px);
  justify-items: center;
  align-items: center;
  height: 74px;
  width: 212px;
  padding-left: 6px;
`;
const Features = styled.div`
  display: flex;
  flex-direction: column;
  padding-top: 22px;
`;
const FeatureRow = styled.div`
  display: flex;
`;
const Feature = styled.div`
  width: 36px;
  height: 28px;
  display: flex;
  align-items: center;
  justify-content: center;
  opacity: ${(p) => (p.$dim ? 0.25 : 1)};
`;
const Ticks = styled.div`
  width: 516px;
  height: 11px;
  margin: 2px 0 0 9px;
  border-bottom: 3px solid #c8c8c8;
  background: repeating-linear-gradient(to right, transparent 0 10px, #c8c8c8 10px 13px, transparent 13px 36px);
`;
const Marker = styled.div`
  margin-left: -8px;
`;
const TimelineEnd = styled.div`
  flex: 1;
  height: 73px;
  display: flex;
  justify-content: flex-end;
  align-items: center;
  padding-right: 21px;
`;

const F = ({ children }) => <Ico w={24} h={26}>{children}</Ico>;
const feats = {
  s: <F><rect x="-10" y="-11" width="19" height="21" stroke="#666" strokeWidth="1.3" /><path d="M-4.5 5 V-6 H6 Q5 3 -4 5.5" stroke="#888" strokeWidth="1.1" />{[[-10, -11], [9, -11], [-10, 10], [-4.5, -6], [6, -6], [-4.5, 5]].map(([x, y]) => <Sq key={x + ',' + y} x={x} y={y} r={1.5} />)}<path d="M3 12 L4 7 L9 1 L12 4 L7 10z" fill="#f5b13d" /><path d="M8.5 1.5 L10.5 -1 L13 2 L11.5 4.5z" fill="#ee2c2c" /><path d="M3 12.5 L4 8.5 L6 11z" fill="#333" /></F>,
  e: <F><path d="M-11 8 H4 L9 4 V8 L5 12.5 H-11z" fill="#8a8a8a" /><path d="M-11 -7 L-7 -12 H8 V4 L4 9 H-11z" fill="#3c8fd0" /><path d="M-10.5 -6.5 H3.5 V8.5 H-10.5z" fill="#69b4ea" /><path d="M-10 -7.5 L-6.5 -11.5 H7.5 L4 -7.5z" fill="#9bd0f4" /><path d="M11 8 V-9" stroke="#444" strokeWidth="1.3" /><path d="M11 -12.5 L13 -8 H9z" fill="#444" /></F>,
  n: <F><path d="M-11 -2 L-5 -9 H4 L10 -2 V9 L7 12 H-11z" fill="#dcdcdc" stroke="#555" strokeWidth="1.5" /><path d="M-11 -2 H4 V12" stroke="#aaa" /><path d="M6 -13 L7.5 -8.5 L11.5 -10 L10 -6.5 L13 -5 L10 -3.5 L11.5 0 L7.5 -1.5 L6 3 L4.5 -1.5 L0.5 0 L2 -3.5 L-1 -5 L2 -6.5 L0.5 -10 L4.5 -8.5z" fill="#ffb000" /></F>,
  m: <F><path d="M-1 -11 V10 H-11z" stroke="#777" strokeWidth="1.3" /><path d="M1 -11 V10 H11z" fill="#69b4ea" stroke="#3c8fd0" /></F>,
  c: <F><path d="M-11 0 L-8 -4 H-3 V-8 L0 -12 H12 V0 L9 5 H5 V8 L2 12 H-11z" fill="#69b4ea" stroke="#3c8fd0" /></F>,
};
const featureOrder = 'sensemnsnecmsss'.split('');

/* ---------- taskbar ---------- */
const Taskbar = styled.footer`
  background: linear-gradient(to right, #d9dadf, #d2d8e0 30%, #d3d8e1 70%, #dadada);
  display: flex;
  align-items: stretch;
`;
const StartBtn = styled.div`
  width: 73px;
  display: flex;
  align-items: center;
  padding-left: 24px;
`;
const SearchBox = styled.div`
  width: 431px;
  border: 2px solid #cbcbcb;
  background: #fff;
  display: flex;
  align-items: center;
  padding: 0 14px 0 13px;
  gap: 18px;
  font-size: 24px;
  color: #333;
`;
const SearchText = styled.span`
  flex: 1;
  line-height: 30px;
  padding-top: 2px;
`;
const TaskView = styled.div`
  width: 72px;
  display: flex;
  align-items: center;
  justify-content: center;
`;
const AppsRow = styled.div`
  display: flex;
  padding-left: 3px;
`;
const AppIcon = styled.div`
  width: 75px;
  display: flex;
  align-items: center;
  justify-content: center;
  background: ${(p) => (p.$open ? 'linear-gradient(#edeff3, #edeff3) center / 73px 100% no-repeat' : 'none')};
  &::after {
    content: "";
    align-self: flex-end;
    height: 3px;
    width: ${(p) => p.$line || 0}px;
    margin-left: ${(p) => -18 - (p.$line || 0) / 2}px;
    margin-right: ${(p) => 18 - (p.$line || 0) / 2}px;
    background: #0078d7;
  }
`;
const Tray = styled.div`
  margin-left: auto;
  width: 352px;
  display: grid;
  grid-template-columns: 26px 46px 33px 52px 116px 71px 8px;
  align-items: center;
  justify-items: center;
  color: #111;
  font-family: "Open Sans", sans-serif;
  font-size: 18px;
`;
const Clock = styled.div`
  display: flex;
  flex-direction: column;
  align-items: center;
  gap: 4px;
  line-height: 24px;
  letter-spacing: 0.4px;
`;
const ShowDesktop = styled.div`
  width: 1.5px;
  height: 60px;
  background: #a0a2a8;
`;

const taskApps = [
  [61, <Ico s={36}><defs><linearGradient id="eg1" x1="0" y1="0" x2="1" y2="0.3"><stop offset="0" stopColor="#1c9de0" /><stop offset="0.6" stopColor="#30c8d8" /><stop offset="1" stopColor="#5fe060" /></linearGradient><linearGradient id="eg2" x1="0" y1="0" x2="1" y2="1"><stop offset="0" stopColor="#0e84d8" /><stop offset="1" stopColor="#1060b8" /></linearGradient></defs><circle r="18" fill="url(#eg2)" /><path d="M-18 0 A18 18 0 0 1 18 0 Q18 8 9 8 Q3 8 3 5 Q5 3 5 0 Q5 -6 -3 -6 Q-13 -6 -18 0z" fill="url(#eg1)" /><path d="M-6 3 Q-6 -4 1 -5 Q5 -4 5 0 Q5 3 3 5 Q3 8 9 8 Q13 8 16.5 6 Q12 16 4 17.5 Q-6 14 -6 3z" fill="#0c4f9c" /><path d="M5 0 Q5 3 3 5 Q3 8 9 8 Q13 8 16.8 5.5 Q13 12 6 11 Q-2 9 -2 2 Q0 -3 5 0z" fill="#d5dae2" /></Ico>],
  [0, <Ico s={36}><circle r="18" fill="#fff" /><path d="M0 0 L-15.6 -9 A18 18 0 0 1 15.6 -9 L16.5 -7.5 H0z" fill="#e33b2e" /><path d="M0 0 L15.6 -9 A18 18 0 0 1 0 18z" fill="#fdcc13" /><path d="M0 0 L0 18 A18 18 0 0 1 -15.6 -9z" fill="#249a41" /><path d="M0 18 L7.5 4 L0 0 L-7 4z" fill="#249a41" /><path d="M0 18 A18 18 0 0 0 16.5 -8 H0 L7.5 4z" fill="#fdcc13" /><circle r="8.5" fill="#fff" /><circle r="6.8" fill="#1f6fee" /></Ico>],
  [0, <Ico s={36}><path d="M-16 -13 h12 l3 4 H-16z" fill="#e0a010" /><path d="M-16 -8 H16 V12 H-16z" fill="#ffd257" /><path d="M-16 2 H16 V12 H-16z" fill="#fbc93f" /><path d="M-11 14 V2 Q-11 1 -10 1 H10 Q11 1 11 2 V14 H5 V7 H-5 V14z" fill="#3291dc" /></Ico>],
  [0, <Ico s={36}><circle r="18" fill="#1a1a1a" /><path d="M1 -8.5 H-1 A8.5 8.5 0 1 0 -1 8.5 M1 0 H7 V9" stroke="#fff" strokeWidth="4" /></Ico>],
  [0, <Ico s={36}><defs><linearGradient id="ma" x1="1" y1="0" x2="0" y2="1"><stop offset="0" stopColor="#10a5ff" /><stop offset="0.6" stopColor="#4a45f5" /><stop offset="1" stopColor="#6a22f5" /></linearGradient></defs><rect x="-18" y="-18" width="36" height="36" fill="url(#ma)" /><path d="M-14 9 L-6 -9 H-2 L-10 9z M-5 9 L3 -9 H7 L-1 9z" fill="#e4e4ff" /><path d="M3 -9 H11.5 V9 H8 V-2z" fill="#b8c8ff" /><circle cx="7" cy="7" r="2.2" fill="#fff" /></Ico>],
  [0, <Ico s={36}><rect x="-18" y="-18" width="36" height="36" fill="#0a78d6" /><circle r="9" cy="1.5" fill="#fff" /><circle r="3.5" cy="1.5" fill="#0a78d6" /><path d="M0 1 L5 -5" stroke="#0a78d6" strokeWidth="2.5" /><path d="M-10 6 A11.5 11.5 0 1 1 10 6" stroke="#fff" strokeWidth="1.5" strokeDasharray="1.5 2.5" /></Ico>],
  [0, <Ico s={36}><circle r="18" fill="#47d62c" /><path d="M0 1 L6.5 -5.5 M0 1 L-8 -2 M0 1 L2.5 8" stroke="#111" strokeWidth="3" /><circle cx="6.5" cy="-6" r="2.8" fill="#111" /><circle cx="-8" cy="-2" r="2.6" fill="#111" /><circle cx="2.8" cy="8" r="2.8" fill="#111" /></Ico>],
  [0, <Ico s={36}><rect x="-7.5" y="-18" width="15" height="15" rx="2" fill="#929aa5" /><path d="M-7.5 -5 H7.5 V4 Q7.5 6 5 6 H-5 Q-7.5 6 -7.5 4z" fill="#555b66" /><circle cy="1.5" r="2.8" fill="#e8541a" /><path d="M-9 -4 V7 Q-9 10 -6 10 H6 Q9 10 9 7 V-4 M0 10 V16 M-6 17 H6" stroke="#8a93a0" strokeWidth="2.8" /></Ico>],
  [73, <FusionLogo w={34} h={36} />],
  [61, <Ico s={36}><defs><linearGradient id="dr" x1="0" y1="0" x2="1" y2="1"><stop offset="0" stopColor="#2a1416" /><stop offset="0.4" stopColor="#8c1220" /><stop offset="1" stopColor="#e82530" /></linearGradient></defs><rect x="-18" y="-18" width="36" height="36" rx="3" fill="url(#dr)" /><path d="M-17 -12 Q2 -17 9 -5 Q-2 -13 -17 -8z" fill="#fff" /><path d="M-15 7 L-9 2 L-6 -3 L-2 -3 L0 -1 Q10 3 11 17 H-4 Q0 12 -3 8 Q-8 10 -12 8z" fill="#fff" /></Ico>],
];

export default function App() {
  return (
    <Screen>
      <Global />
      <TitleBar>
        <TitleLeft>
          <FusionLogo />
          <TitleText>Finger Joint Box v4* (MeiyiDuan) - Autodesk Fusion (教育版许可)</TitleText>
        </TitleLeft>
        <Progress />
        <WinButtons>
          <Ico s={24}><path d="M-7 0.5 H8" stroke="#888" strokeWidth="1.2" /></Ico>
          <Ico s={24}><path d="M-7.5 -4.5 H4 V7 H-7.5z M-4 -4.5 V-7.5 H7.5 V4 H4" stroke="#888" strokeWidth="1.2" /></Ico>
          <Ico s={24}><path d="M-7 -7.5 L8 7.5 M8 -7.5 L-7 7.5" stroke="#888" strokeWidth="1.2" /></Ico>
        </WinButtons>
      </TitleBar>

      <TabBar>
        <QuickAccess>
          <Ico s={24}>{[-11, -3.5, 4].map((x) => [-11, -3.5, 4].map((y) => <rect key={x + '_' + y} x={x} y={y} width="6.6" height="6.6" fill={GREY} />))}</Ico>
          <Ico s={24}><path d="M-10 -12 H3 V-5 H10 V12 H-10z M4.500 -12 L10 -6.500 H4.500z" fill={GREY} /></Ico>
          <Caret $c={GREY} $h={8} />
          <Ico s={24}><path d="M-11 -11 H11 V11 H-11z" fill={GREY} /><path d="M-5 -10 V-3 H5 V-10 M-5 10 V2 H5 V10 M2 -8 V-5 M-1 5 V9" stroke="#ddd" strokeWidth="1.4" /></Ico>
          <Ico s={24}><path d="M-6 -1.5 H1 Q9 -1 9 9" stroke={GREY} strokeWidth="3" /><path d="M-1 -8.5 L-8 -1.5 L-1 5.5" stroke={GREY} strokeWidth="2.6" /></Ico>
          <Caret $c={GREY} $h={8} />
          <Ico s={24}><path d="M6 -1.5 H-1 Q-9 -1 -9 9" stroke="#8e8e8e" strokeWidth="2.4" /><path d="M1 -8.5 L8 -1.5 L1 5.5" stroke="#8e8e8e" strokeWidth="2" /></Ico>
          <Caret $c="#999" $h={8} />
        </QuickAccess>
        <HomeTab><Ico s={24}><path d="M0 -11 L4 -7 V-9 H7 V-3.5 L11 1 H8.5 V10 H3 V3 H-3 V10 H-8.5 V1 H-11z" fill="#777" /></Ico></HomeTab>
        <DocTab $w={938} $active>
          <DocName><Cube />Finger Joint Box v4*</DocName>
          <DocClose><Cross /></DocClose>
        </DocTab>
        <DocTab $w={937}>
          <DocName><Cube />car design v14*</DocName>
          <DocClose><Cross /></DocClose>
        </DocTab>
        <AddTab><Ico s={20}><path d="M0 -9.5 V9.5 M-9.5 0 H9.5" stroke="#888" strokeWidth="3.6" /></Ico></AddTab>
        <Account>
          <Ico s={24}><circle r="12" fill={GREY} /><circle r="7.5" cy="0.500" fill="#cbcbcb" /><path d="M-2 4.500 L-4 2 Q-6 -3 -1 -6 L1 -8 L1 -4 L3.500 -1.500 L8 -1 L6 2 Q3 6 -2 4.500z" fill={GREY} /><path d="M-3 12 V4 M3 -12 L1.500 -4 M12 -5 L4 0" stroke={GREY} strokeWidth="2" /><path d="M-7 5 L-4.500 12 M5 -9 L3 -4 L9 -9" stroke="#cbcbcb" strokeWidth="1.800" /></Ico>
          <Ico s={24}><circle r="11.2" stroke={GREY} strokeWidth="1.5" /><circle r="9" fill={GREY} /><path d="M-0.5 -5.5 V2 H5.5" stroke="#e4e4e4" strokeWidth="1.8" /></Ico>
          <Ico s={24}><path d="M-10 8 V6 Q-7 4 -7 -2 Q-7 -8 -1.5 -9.5 V-12 H1.5 V-9.5 Q7 -8 7 -2 Q7 4 10 6 V8z M-3 9.5 H3 L0 12z" fill={GREY} /><circle cx="6" cy="-6" r="5" fill="#1a9be0" stroke="#cbcbcb" /></Ico>
          <Ico s={24}><circle r="12" fill={GREY} /><path d="M-4 -3 Q-4 -7.5 0 -7.5 Q4.5 -7.5 4.5 -3.5 Q4.5 -1 0.5 0.5 V3" stroke="#e0e0e0" strokeWidth="2.6" /><rect x="-1" y="5.5" width="3" height="3" fill="#e0e0e0" /></Ico>
          <Ico s={36}><clipPath id="av"><circle r="18" /></clipPath><circle r="18" fill="#93a8c8" /><g clipPath="url(#av)" fill="#4d5d78"><path d="M-9 -6 Q-9 -16 0 -16 Q9 -16 9 -6 Q9 2 5 6 V10 Q15 12 17 18 H-17 Q-15 12 -5 10 V6 Q-9 2 -9 -6z" /></g></Ico>
        </Account>
      </TabBar>

      <Ribbon>
        <RibbonInner>
          <Workspace>设计<Caret $h={8} /></Workspace>
          <RibbonMain>
            <MenuTabs>
              {['实体', '曲面', '网格', '钣金', '塑料', '实用程序', '管理', '草图'].map((t) => <MenuTab key={t} $on={t === '草图'}>{t}</MenuTab>)}
            </MenuTabs>
            <Groups>
              <ToolGroup w={400} label="创建" tools={createTools} dx={-2} pull={6} />
              <ToolGroup w={275} label="修改" tools={modifyTools} dx={3} pull={4} />
              <ToolGroup w={103} label="自动化" tools={autoTools} pull={0} />
              <ToolGroup w={790} label="约束" tools={constraintTools} dx={3} pull={4} />
              <ToolGroup w={146} label="配置" tools={configTools} dx={3} pull={2} />
              <ToolGroup w={88} label="检验" tools={measureTools} dx={1} pull={0} />
              <ToolGroup w={146} label="插入" tools={insertTools} tw={62} dx={4} pull={2} />
              <Group $w={91} $last>
                <Tools><SelectTile><Ico s={57}><rect x="-23.5" y="-24" width="41" height="32" stroke="#6fd66f" strokeWidth="1.6" strokeDasharray="6 3" /><path d="M8 -3 V21 L13 16.5 L17 24.5 L20.5 22.5 L17 15 H23z" fill="#fff" /></Ico></SelectTile></Tools>
                <GroupLabel>选择<Caret /></GroupLabel>
              </Group>
              <Group $w={109} $hl>
                <Tools><Ico s={48}><circle r="23" fill="#62c800" /><path d="M-12 1 L-4 9 L12 -8" stroke="#fff" strokeWidth="5.5" /></Ico></Tools>
                <GroupLabel>完成草图<Caret /></GroupLabel>
              </Group>
            </Groups>
          </RibbonMain>
        </RibbonInner>
      </Ribbon>

      <Viewport>
        <Drawing />
        <Overlay>
          <BrowserPanel>
            <PanelHeader $h={37}>
              <Ico w={30} h={10}><path d="M-8 1 L0 -4 V6z M0 1 L8 -4 V6z" fill="#333" /></Ico>
              <span>浏览器</span>
              <HeaderButton><Ico s={14}><circle r="7" fill="#333" /><path d="M-4 0 H4" stroke="#ddd" strokeWidth="1.6" /></Ico></HeaderButton>
            </PanelHeader>
            <TreeArea>
              <ScrollTrack><ScrollThumb /></ScrollTrack>
              <Tree>{rows.map((row, i) => <TreeItem key={i} row={row} />)}</Tree>
            </TreeArea>
            <PanelHeader $h={36} $open>
              <span />
              <span>注释</span>
              <HeaderButton><Ico s={14}><circle r="7" fill="#333" /><path d="M-4 0 H4 M0 -4 V4" stroke="#ddd" strokeWidth="1.6" /></Ico></HeaderButton>
            </PanelHeader>
          </BrowserPanel>
          <Center>
            <NavBar>
              <Ico s={24}><path d="M-2 -6 V11 H2 V-6 H5 L0 -11 L-5 -6z" fill="#d8dce2" stroke="#555" /><path d="M-4 -2 Q-11 -1 -11 2 Q-10 6 0 6 Q10 6 11 2 Q11 -1 4 -2" stroke="#444" strokeWidth="1.5" /></Ico>
              <Caret $h={6} />
              <Ico s={24}><rect x="-10" y="-2" width="21" height="13" fill="#d5d9df" stroke="#555" strokeWidth="1.3" /><rect x="-6" y="1.5" width="13" height="6.5" fill="#a9b0ba" stroke="#444" /><path d="M-9 -4 L4 -9 L3 -6 H11 V-4z" fill="#ccc" stroke="#555" /></Ico>
              <Ico s={24}><path d="M-4 11 Q-9 4 -11 1 Q-9 -1 -5 3 L-7 -7 Q-5 -9 -4 -6 L-2 -1 L-2 -10 Q0 -12 1 -10 L2 -1 L4 -9 Q6 -10 6 -8 L5 0 L9 -5 Q11 -5 10 -3 L6 7 L5 11z" fill="#fff" stroke="#444" strokeWidth="1.3" /></Ico>
              <Ico s={24}><path d="M2 2 L11 11" stroke="#333" strokeWidth="3.5" /><circle cx="-3" cy="-4" r="7.5" fill="#e3eeee" stroke="#777" strokeWidth="1.3" /><path d="M7 -8 H12 M9.5 -10.5 V-5.5 M7 -4 H12" stroke="#444" /></Ico>
              <Ico s={24}><rect x="-11" y="-10.5" width="22" height="22" stroke="#777" strokeDasharray="3 2" /><path d="M2 2 L11 11" stroke="#333" strokeWidth="3.5" /><circle cx="-3" cy="-3" r="7.5" fill="#e3eeee" stroke="#777" strokeWidth="1.3" /></Ico>
              <Caret $h={6} />
              <Ico s={24}><rect x="-11" y="-11" width="22" height="18" fill="#eee" stroke="#555" strokeWidth="1.2" /><rect x="-9" y="-9" width="18" height="14" fill="#8db3e2" stroke="#456" /><path d="M-2 7 V10 M2 7 V10 M-6 11 H6" stroke="#555" strokeWidth="1.8" /></Ico>
              <Caret $h={6} />
              <Ico s={24}><rect x="-11" y="-10.5" width="22" height="21.5" fill="#e8ebef" stroke="#333" strokeWidth="1.2" /><path d="M-7.3 -10 V11 M-3.7 -10 V11 M0 -10 V11 M3.7 -10 V11 M7.3 -10 V11 M-11 -7 H11 M-11 -3.5 H11 M-11 0 H11 M-11 3.5 H11 M-11 7 H11" stroke="#555" strokeWidth="0.9" /></Ico>
              <Caret $h={6} />
              <Ico s={24}><path d="M-11 -9.5 H11 V10 H-11z" fill="#6f97c8" stroke="#46688f" /><path d="M-9 -7.5 H-1.5 V-1 H-9z M1.5 -7.5 H9 V-1 H1.5z M-9 1.5 H-1.5 V8 H-9z M1.5 1.5 H9 V8 H1.5z" fill="#9bbde6" stroke="#46688f" strokeWidth="0.8" /></Ico>
              <Caret $h={6} />
            </NavBar>
          </Center>
          <RightRail>
            <PaletteTab>
              <Rewind />
              <VerticalText>草图选项板</VerticalText>
            </PaletteTab>
            <PinButton><Ico s={24}><path d="M12 12 H0 A12 12 0 1 1 12 0z" fill="#000" /><path d="M-7 3 L4 -4 M-4 4.5 L6 -2 M1 4 L7 0" stroke="#fff" strokeWidth="1.5" /></Ico></PinButton>
          </RightRail>
        </Overlay>
      </Viewport>

      <Timeline>
        <Playback>
          <Ico w={18} h={20}><path d="M-7.5 -9 V9" stroke={GREY} strokeWidth="2" /><path d="M8 -8.5 L-5.5 0 L8 8.5z" fill={GREY} /></Ico>
          <Ico w={20} h={20}><path d="M5 -9 L-10 0 L5 9z" fill={GREY} /><path d="M8 -4 V4" stroke={GREY} strokeWidth="2.4" /></Ico>
          <Ico w={20} h={24}><path d="M-9 -11.5 L9.5 0 L-9 11.5z" fill={GREY} /></Ico>
          <Ico w={20} h={20}><path d="M-5 -9 L10 0 L-5 9z" fill={GREY} /><path d="M-8 -4 V4" stroke={GREY} strokeWidth="2.4" /></Ico>
          <Ico w={18} h={20}><path d="M7.5 -9 V9" stroke={GREY} strokeWidth="2" /><path d="M-8 -8.5 L5.5 0 L-8 8.5z" fill={GREY} /></Ico>
        </Playback>
        <Features>
          <FeatureRow>{featureOrder.map((k, i) => <Feature key={i} $dim={i > 3}>{feats[k]}</Feature>)}</FeatureRow>
          <Ticks />
        </Features>
        <Marker><svg width="18" height="64" viewBox="0 -15 18 64"><path d="M0 0 H18 V8 L11 13 V48 H8 V13 L0 8z" fill={GREY} /></svg></Marker>
        <TimelineEnd><Gear s={22} c="#888" /></TimelineEnd>
      </Timeline>

      <Taskbar>
        <StartBtn><svg width="24" height="24" viewBox="0 0 24 24"><path d="M0 3.3 L10 2 V11.4 H0z M11 1.8 L24 0 V11.4 H11z M0 12.5 H10 V22 L0 20.7z M11 12.5 H24 V24 L11 22.2z" fill="#000" /></svg></StartBtn>
        <SearchBox>
          <Ico s={24}><circle cx="4" cy="-4" r="7.5" stroke="#222" strokeWidth="1.8" /><path d="M-1.5 1.5 L-11.5 11.5" stroke="#222" strokeWidth="1.8" /></Ico>
          <SearchText>搜索</SearchText>
          <svg width="92" height="40" viewBox="0 0 92 40">
            <path d="M36 3 Q39.5 17 53 19.5 Q39.5 22.5 36 37 Q32.5 22.5 19 19.5 Q32.5 17 36 3z" fill="#ffc820" stroke="#ffc820" strokeWidth="1.5" />
            <path d="M69.5 17 Q71 24 78 25.5 Q71 27 69.5 34 Q68 27 61 25.5 Q68 24 69.5 17z" fill="#ffc83d" />
            <path d="M6 27 L9 31 L13 31 L10 35 L11 38 L6 36.5 L1.5 37 L3 33 L1 30 L5 31z" fill="#12a8f0" />
            <circle cx="60.5" cy="5" r="3.4" fill="#f5602a" /><circle cx="88" cy="35" r="3.3" fill="#8bc53f" />
          </svg>
        </SearchBox>
        <TaskView><Ico w={26} h={26}><path d="M-11 -11.5 V-8 H4 V-11.5 M-11 -5 H4 V5.5 H-11z M-11 12 V8.5 H4 V12 M10.5 -11.5 V-6 M10.5 -1 V12" stroke="#111" strokeWidth="1.6" /><rect x="9" y="-4.5" width="3" height="3" fill="#111" /></Ico></TaskView>
        <AppsRow>
          {taskApps.map(([line, ic], i) => <AppIcon key={i} $line={line} $open={i === 8}>{ic}</AppIcon>)}
        </AppsRow>
        <Tray>
          <Ico s={20}><path d="M-8.5 4 L0 -4.5 L8.5 4" stroke="#222" strokeWidth="1.5" /></Ico>
          <Ico w={26} h={20}><path d="M-6 -5.5 H9.5 V6 H-7" stroke="#111" strokeWidth="1.5" /><rect x="-5" y="-3.5" width="7" height="7.5" fill="#111" /><rect x="10" y="-2.5" width="2" height="5" fill="#111" /><path d="M-11.5 -8.5 V-5 M-7.5 -8.5 V-5 M-12.5 -5 H-6.5 V-3 Q-7 -0.5 -9.5 -0.5 Q-12 -0.5 -12.5 -3z M-9.5 -0.5 V6 H-7" stroke="#111" strokeWidth="1.3" /></Ico>
          <Ico s={22}><path d="M-9 10 Q-8 -6 9 -9 M-5 10 Q-4 -1 9 -4 M-0.5 10 Q0.5 3 9 1" stroke="#222" strokeWidth="1.4" /><circle cx="6.5" cy="8" r="2" fill="#111" /></Ico>
          <span>ENG</span>
          <Clock><span>11:53</span><span>2025/3/3</span></Clock>
          <Ico w={36} h={36}><path d="M-12 -12 H12 V7 H4 L-4 14 V7 H-12z" fill="#000" /><path d="M-7 -6.5 H7 M-7 -3 H7 M-7 0.5 H3" stroke="#ddd" strokeWidth="1.3" /><circle cx="11" cy="11.5" r="12" fill="#dcdcdc" stroke="#888" /><text x="11" y="17.5" fontSize="17" fontWeight="600" fontFamily="Open Sans" fill="#111" textAnchor="middle">1</text></Ico>
          <ShowDesktop />
        </Tray>
      </Taskbar>
    </Screen>
  );
}
